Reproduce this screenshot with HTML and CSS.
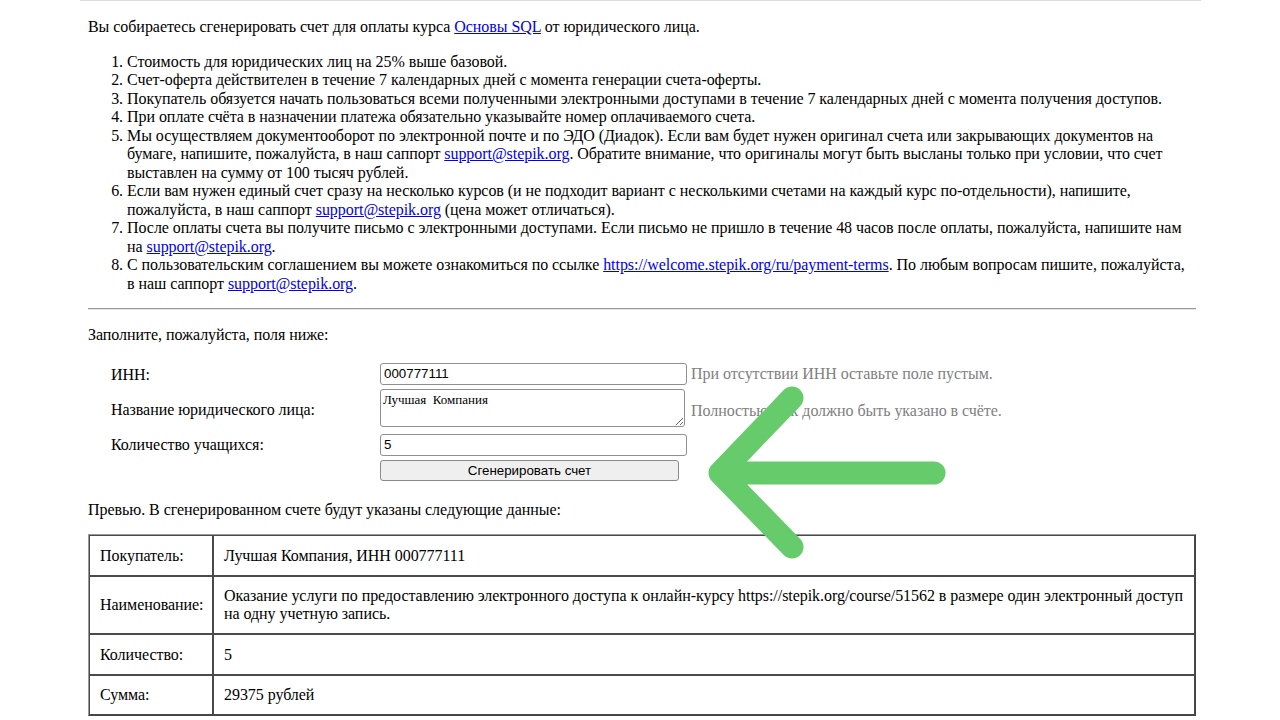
FILE: index.html
```html
<!DOCTYPE html>
<html lang="ru">
<head>
<meta charset="utf-8">
<title>Счет для юридического лица</title>
<link rel="stylesheet" href="styles.css">
</head>
<body>
<div class="page">
  <p class="intro">Вы собираетесь сгенерировать счет для оплаты курса <a href="#">Основы SQL</a> от юридического лица.</p>
  <ol class="terms">
    <li>Стоимость для юридических лиц на 25% выше базовой.</li>
    <li>Счет-оферта действителен в течение 7 календарных дней с момента генерации счета-оферты.</li>
    <li>Покупатель обязуется начать пользоваться всеми полученными электронными доступами в течение 7 календарных дней с момента получения доступов.</li>
    <li>При оплате счёта в назначении платежа обязательно указывайте номер оплачиваемого счета.</li>
    <li>Мы осуществляем документооборот по электронной почте и по ЭДО (Диадок). Если вам будет нужен оригинал счета или закрывающих документов на бумаге, напишите, пожалуйста, в наш саппорт <a href="#">support@stepik.org</a>. Обратите внимание, что оригиналы могут быть высланы только при условии, что счет выставлен на сумму от 100 тысяч рублей.</li>
    <li>Если вам нужен единый счет сразу на несколько курсов (и не подходит вариант с несколькими счетами на каждый курс по-отдельности), напишите, пожалуйста, в наш саппорт <a href="#">support@stepik.org</a> (цена может отличаться).</li>
    <li>После оплаты счета вы получите письмо с электронными доступами. Если письмо не пришло в течение 48 часов после оплаты, пожалуйста, напишите нам на <a href="#">support@stepik.org</a>.</li>
    <li>С пользовательским соглашением вы можете ознакомиться по ссылке <a href="#">https://welcome.stepik.org/ru/payment-terms</a>. По любым вопросам пишите, пожалуйста, в&nbsp;наш саппорт <a href="#">support@stepik.org</a>.</li>
  </ol>
  <hr class="sep">
  <p class="fill">Заполните, пожалуйста, поля ниже:</p>
  <form class="form">
    <label class="lbl lbl-1">ИНН:</label>
    <input class="field" type="text" value="000777111">
    <span class="hint">При отсутствии ИНН оставьте поле пустым.</span>

    <label class="lbl lbl-2">Название юридического лица:</label>
    <textarea class="area">Лучшая  Компания</textarea>
    <span class="hint hint-2">Полностью, как должно быть указано в счёте.</span>

    <label class="lbl lbl-3">Количество учащихся:</label>
    <input class="field field-3" type="text" value="5">
    <span></span>

    <span></span>
    <button class="btn" type="button">Сгенерировать счет</button>
    <span></span>
  </form>
  <p class="preview-title">Превью. В сгенерированном счете будут указаны следующие данные:</p>
  <table class="preview">
    <tr><td class="k">Покупатель:</td><td>Лучшая Компания, ИНН 000777111</td></tr>
    <tr><td class="k">Наименование:</td><td>Оказание услуги по предоставлению электронного доступа к онлайн-курсу https://stepik.org/course/51562 в размере один электронный доступ на одну учетную запись.</td></tr>
    <tr><td class="k">Количество:</td><td>5</td></tr>
    <tr><td class="k">Сумма:</td><td>29375 рублей</td></tr>
  </table>
</div>
<svg class="arrow" width="1280" height="720" viewBox="0 0 1280 720" aria-hidden="true">
  <path d="M934 473 L720 473 M792 398 L720 473 L792 547" fill="none" stroke="#66cb6a" stroke-width="23" stroke-linecap="round" stroke-linejoin="round"/>
</svg>
</body>
</html>
```
FILE: styles.css
```css
html, body {
  margin: 0;
  padding: 0;
  background: #fff;
}
body {
  font-family: "Liberation Serif", "Times New Roman", serif;
  font-size: 16px;
  line-height: 18.5px;
  letter-spacing: -0.05px;
  color: #000;
  height: 720px;
  overflow: hidden;
  position: relative;
}
a {
  color: #0000ee;
  text-decoration: underline;
}
.page {
  margin-left: 80px;
  width: 1108px;
  padding: 0 5px 0 8px;
  border-top: 1px solid #dcdcdc;
}
.intro {
  margin: 17px 0 16px;
}
.terms {
  margin: 16px 0 15px;
  padding-left: 39px;
}
.sep {
  margin: 0;
  height: 0;
  border: 0;
  border-top: 1px solid #9a9a9a;
  border-bottom: 1px solid #e4e4e4;
}
.fill {
  margin: 16px 0 0;
}
.form {
  display: grid;
  grid-template-columns: 269px auto 1fr;
  align-items: center;
  padding: 18px 0 4px 23px;
  margin: 0;
}
.lbl {
  line-height: 18px;
}
.lbl-1 {
  padding-top: 2px;
}
.lbl-2 {
  padding-top: 8px;
}
.lbl-3 {
  padding-top: 8px;
}
.field {
  box-sizing: border-box;
  width: 307px;
  height: 22px;
  margin: 0;
  padding: 1px 3px;
  border: 1px solid #8f8f8f;
  border-radius: 3px;
  font-family: "Liberation Sans", Arial, sans-serif;
  font-size: 13.33px;
  letter-spacing: 0;
  color: #000;
  background: #fff;
}
.area {
  box-sizing: border-box;
  width: 305px;
  height: 38px;
  margin: 4px 2px 0 0;
  padding: 2px 2px;
  border: 1px solid #8f8f8f;
  border-radius: 3px;
  font-family: "Liberation Serif", "Times New Roman", serif;
  font-size: 13px;
  letter-spacing: 0;
  resize: vertical;
  white-space: pre-wrap;
}
.field-3 {
  margin-top: 7px;
}
.btn {
  box-sizing: border-box;
  width: 299px;
  height: 21px;
  margin-top: 4px;
  padding: 0;
  border: 1px solid #8a8a8a;
  border-radius: 3px;
  background: #efefef;
  font-family: "Liberation Sans", Arial, sans-serif;
  font-size: 13.33px;
  letter-spacing: 0;
  color: #000;
}
.hint {
  color: #808080;
  padding-left: 4px;
  line-height: 18px;
  white-space: nowrap;
}
.hint-2 {
  padding-top: 10px;
}
.preview-title {
  margin: 16px 0 15px;
}
.preview {
  width: 1108px;
  border-collapse: separate;
  border-spacing: 0;
  border: 1px solid #444;
  border-top-color: #9a9a9a;
  border-left-color: #9a9a9a;
}
.preview td {
  border: 1px solid #4a4a4a;
  padding: 10.5px 4px 10px 10px;
  line-height: 18px;
  vertical-align: middle;
}
.preview td.k {
  width: 108px;
  white-space: nowrap;
}
.arrow {
  position: absolute;
  left: 0;
  top: 0;
  pointer-events: none;
}
```
